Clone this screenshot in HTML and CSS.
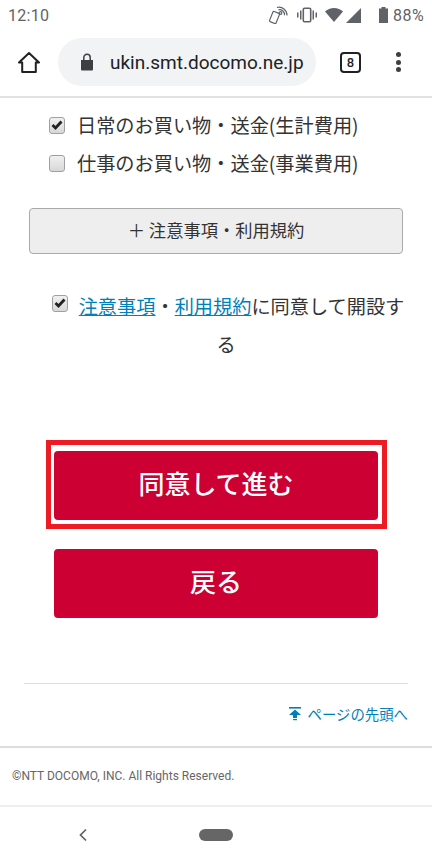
FILE: index.html
```html
<!DOCTYPE html>
<html lang="ja">
<head>
<meta charset="utf-8">
<title>同意して進む</title>
<link rel="stylesheet" href="styles.css">
</head>
<body>
<div class="phone">
  <header class="status">
    <span class="time">12:10</span>
    <div class="status-icons">
      <svg class="i-nfc" width="19" height="18" viewBox="0 0 19 18"><g fill="none" stroke="#5f6368" stroke-width="1.200"><rect x="2" y="6" width="7" height="11" rx="1" transform="rotate(22 5.500 11.500)"/><path d="M8 1.500a8 8 0 0 1 10 8"/><path d="M9.500 3.800a5 5 0 0 1 6 5.500"/><circle cx="11.500" cy="7" r="1.300"/></g></svg>
      <svg class="i-vib" width="20" height="16" viewBox="0 0 20 16"><g fill="#5f6368"><rect x="0" y="5.500" width="1.500" height="5"/><rect x="3" y="3.500" width="1.500" height="9"/><rect x="15.500" y="3.500" width="1.500" height="9"/><rect x="18.500" y="5.500" width="1.500" height="5"/></g><rect x="6.300" y="1.300" width="7.400" height="13.400" rx="1.200" fill="none" stroke="#5f6368" stroke-width="1.600"/></svg>
      <svg class="i-wifi" width="18" height="14" viewBox="0 0 18 14"><path d="M0 3.500C2.500 1.300 5.500 0 9 0s6.500 1.300 9 3.500L9 14z" fill="#5f6368"/></svg>
      <svg class="i-signal" width="15" height="15" viewBox="0 0 15 15"><path d="M15 0v15H0z" fill="#5f6368"/></svg>
      <svg class="i-batt" width="9" height="16" viewBox="0 0 9 16"><path d="M2.500 0h4v1.500H9V16H0V1.500h2.500z" fill="#5f6368"/></svg>
      <span class="pct">88%</span>
    </div>
  </header>

  <nav class="toolbar">
    <svg class="i-home" width="24" height="24" viewBox="0 0 24 24"><path d="M12 3 2 12.500H5.200V22H18.800V12.500H22z" fill="none" stroke="#202124" stroke-width="2" stroke-linejoin="round"/></svg>
    <div class="omnibox">
      <svg class="i-lock" width="14" height="18" viewBox="0 0 14 18"><path d="M1 7h12v9.500a1 1 0 0 1-1 1H2a1 1 0 0 1-1-1z" fill="#3c4043"/><path d="M3.800 7V4.500a3.200 3.200 0 0 1 6.400 0V7" fill="none" stroke="#3c4043" stroke-width="1.500"/></svg>
      <span class="url">ukin.smt.docomo.ne.jp</span>
    </div>
    <span class="tabs">8</span>
    <span class="menu"><i></i><i></i><i></i></span>
  </nav>

  <main class="content">
    <div class="opt">
      <span class="cb"><svg width="12" height="10" viewBox="0 0 12 10"><path d="M1.500 5 4.500 8 10.500 1.500" fill="none" stroke="#222" stroke-width="2.800"/></svg></span>
      <span>日常のお買い物・送金(生計費用)</span>
    </div>
    <div class="opt">
      <span class="cb"></span>
      <span>仕事のお買い物・送金(事業費用)</span>
    </div>

    <div class="terms-btn">＋ 注意事項・利用規約</div>

    <p class="agree">
      <span class="cb cb-inline"><svg width="12" height="10" viewBox="0 0 12 10"><path d="M1.500 5 4.500 8 10.500 1.500" fill="none" stroke="#222" stroke-width="2.800"/></svg></span><a href="#">注意事項</a>・<a href="#">利用規約</a>に同意して開設する
    </p>

    <div class="highlight">
      <button class="primary">同意して進む</button>
    </div>
    <button class="primary back">戻る</button>

    <hr class="rule">
    <div class="top-link">
      <svg width="12" height="14" viewBox="0 0 12 14"><g fill="#0080b8"><rect x="0" y="0" width="12" height="1.600"/><path d="M6 2.500 12 8H8v3H4V8H0z"/><rect x="4" y="12" width="4" height="1.200"/></g></svg>
      <a href="#">ページの先頭へ</a>
    </div>
  </main>

  <footer class="foot">©NTT DOCOMO, INC. All Rights Reserved.</footer>

  <div class="navbar">
    <svg class="i-back" width="10" height="14" viewBox="0 0 10 14"><path d="M8 1.500 2.500 7 8 12.500" fill="none" stroke="#5f6368" stroke-width="1.700"/></svg>
    <span class="pill"></span>
  </div>
</div>
</body>
</html>
```

FILE: styles.css
```css
* { box-sizing: border-box; }
html, body { margin: 0; padding: 0; background: #fff; }
body { font-family: "Noto Sans CJK JP", "Noto Sans", sans-serif; color: #333; }
.phone { width: 432px; height: 864px; overflow: hidden; display: flex; flex-direction: column; }

.status { height: 30px; padding: 0 8px; display: flex; align-items: center; justify-content: space-between; font-family: Roboto, sans-serif; color: #5f6368; font-size: 16px; }
.time { letter-spacing: .3px; }
.status-icons { display: flex; align-items: center; }
.i-nfc { margin-right: 9px; }
.i-vib { margin-right: 8px; }
.i-wifi { margin-right: 3px; }
.i-signal { margin-right: 18px; }
.i-batt { margin-right: 5px; }
.pct { letter-spacing: .4px; }

.toolbar { height: 68px; display: flex; align-items: center; border-bottom: 2px solid #e2e2e2; padding-bottom: 2px; }
.i-home { margin-left: 17px; margin-right: 17px; }
.omnibox { width: 258px; height: 48px; border-radius: 24px; background: #f1f3f4; display: flex; align-items: center; padding-left: 22px; overflow: hidden; }
.url { margin-left: 16px; font-family: Roboto, sans-serif; font-size: 19px; color: #202124; white-space: nowrap; }
.tabs { margin-left: 24px; width: 21px; height: 21px; border: 2px solid #202124; border-radius: 4px; font-family: Roboto, sans-serif; font-size: 13px; font-weight: 500; color: #202124; display: flex; align-items: center; justify-content: center; }
.menu { margin-left: 35px; display: flex; flex-direction: column; gap: 2.500px; }
.menu i { display: block; width: 5px; height: 5px; border-radius: 50%; background: #3c4043; }

.content { height: 648px; padding: 0 24px; font-size: 19.200px; }
.opt { display: flex; align-items: center; height: 38px; padding-left: 25px; gap: 12px; line-height: 38px; }
.opt:first-child { margin-top: 8px; }
.cb { flex: none; width: 16px; height: 17px; border: 1px solid #a0a0a0; border-radius: 3px; background: linear-gradient(#f0f0f0, #d8d8d8); display: inline-flex; align-items: center; justify-content: center; }
.terms-btn { margin: 26px 5px 0; height: 46px; padding-bottom: 3px; background: #eee; border: 1px solid #aaa; border-radius: 4px; font-size: 17.280px; display: flex; align-items: center; justify-content: center; }
.agree { margin: 33px 0 0; padding-left: 20px; text-align: center; line-height: 38px; color: #333; }
.cb-inline { margin: 0 11px 0 4px; vertical-align: 6px; }
.agree a { color: #0080b8; }
.highlight { margin: 77px 0 0 22px; width: 341px; height: 89px; border: 5px solid #ed1c24; padding: 6px 0 0 3px; }
.primary { display: block; width: 324px; height: 69px; border: 0; border-radius: 4px; background: #cc0033; color: #fff; font: 500 26px "Noto Sans CJK JP", sans-serif; padding: 0 0 7px; }
.back { margin: 20px 0 0 30px; }
.rule { margin: 65px 0 0; border: 0; height: 1px; background: #ddd; }
.top-link { margin-top: 19px; display: flex; justify-content: flex-end; align-items: center; gap: 7px; font-size: 14.400px; }
.top-link a { color: #0080b8; text-decoration: none; }

.foot { height: 61px; padding: 0 12px 2px; border-top: 2px solid #ddd; border-bottom: 2px solid #eee; display: flex; align-items: center; font-family: Roboto, sans-serif; font-size: 12px; color: #666; }
.navbar { flex: 1; display: flex; align-items: center; padding: 0 0 2px 78px; }
.pill { margin-left: 111px; width: 34px; height: 12px; border-radius: 6px; background: #666; }
```
